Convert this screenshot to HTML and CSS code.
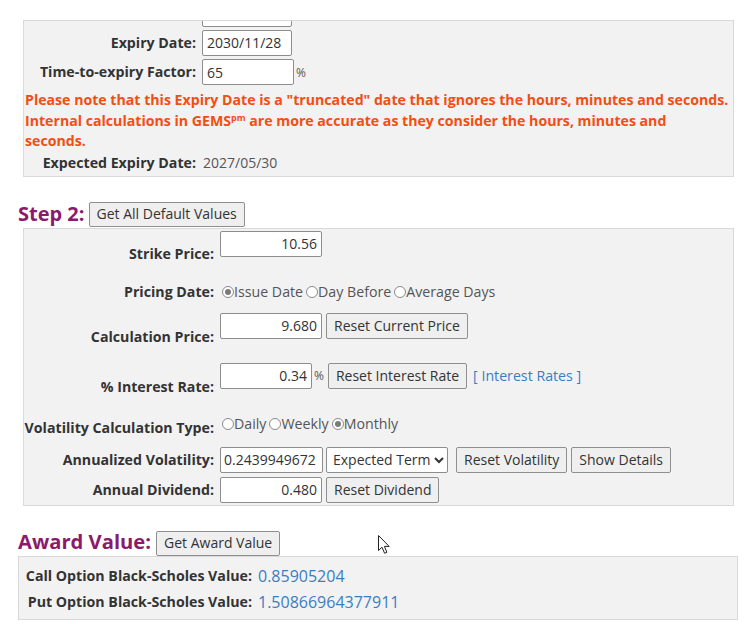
FILE: index.html
```html
<!DOCTYPE html>
<html>
<head>
<meta charset="utf-8">
<link rel="stylesheet" href="styles.css">
</head>
<body>
<div class="page">
  <section class="panel p1">
    <div class="row r0"><div class="lbl"></div><div class="ctl"><input class="inp w90" value=""></div></div>
    <div class="row r-exp"><div class="lbl">Expiry Date:</div><div class="ctl"><input class="inp w90" value="2030/11/28"></div></div>
    <div class="row r-fac"><div class="lbl">Time-to-expiry Factor:</div><div class="ctl"><input class="inp w92" value="65"><span class="pct">%</span></div></div>
    <p class="note">Please note that this Expiry Date is a "truncated" date that ignores the hours, minutes and seconds.<br>Internal calculations in GEMS<sup>pm</sup> are more accurate as they consider the hours, minutes and<br>seconds.</p>
    <div class="row r-eed"><div class="lbl">Expected Expiry Date:</div><div class="ctl val">2027/05/30</div></div>
  </section>

  <div class="head step"><h2>Step 2:</h2><button class="btn">Get All Default Values</button></div>

  <section class="panel p2">
    <div class="row s1"><div class="lbl">Strike Price:</div><div class="ctl"><input class="inp num w102" value="10.56"></div></div>
    <div class="row s2"><div class="lbl">Pricing Date:</div><div class="ctl radios">
      <label><input type="radio" name="pd" checked>Issue Date</label><label><input type="radio" name="pd">Day Before</label><label><input type="radio" name="pd">Average Days</label>
    </div></div>
    <div class="row s3"><div class="lbl">Calculation Price:</div><div class="ctl"><input class="inp num w102" value="9.680"><button class="btn">Reset Current Price</button></div></div>
    <div class="row s4"><div class="lbl">% Interest Rate:</div><div class="ctl"><input class="inp num w92" value="0.34"><span class="pct">%</span><button class="btn">Reset Interest Rate</button><a class="link" href="#">[ Interest Rates ]</a></div></div>
    <div class="row s5"><div class="lbl">Volatility Calculation Type:</div><div class="ctl radios">
      <label><input type="radio" name="vt">Daily</label><label><input type="radio" name="vt">Weekly</label><label><input type="radio" name="vt" checked>Monthly</label>
    </div></div>
    <div class="row s6"><div class="lbl">Annualized Volatility:</div><div class="ctl"><input class="inp w103" value="0.2439949672"><select class="sel"><option>Expected Term</option></select><button class="btn gapl">Reset Volatility</button><button class="btn">Show Details</button></div></div>
    <div class="row s7"><div class="lbl">Annual Dividend:</div><div class="ctl"><input class="inp num w102" value="0.480"><button class="btn">Reset Dividend</button></div></div>
  </section>

  <div class="head award"><h2>Award Value:</h2><button class="btn">Get Award Value</button></div>

  <section class="panel p3">
    <div class="vrow"><div class="vlbl">Call Option Black-Scholes Value:</div><div class="vval">0.85905204</div></div>
    <div class="vrow"><div class="vlbl">Put Option Black-Scholes Value:</div><div class="vval">1.50866964377911</div></div>
  </section>

  <svg class="cursor" width="13" height="20" viewBox="0 0 13 20"><path d="M0.5 0.5 L0.5 15.5 L4 12.2 L6.6 18.3 L8.9 17.3 L6.4 11.4 L11.2 11.4 Z" fill="#fff" stroke="#222" stroke-width="1" stroke-linejoin="round"/></svg>
</div>
</body>
</html>
```
FILE: styles.css
```css
* { box-sizing: border-box; }
html, body { margin: 0; padding: 0; background: #fff; }
body {
  font-family: "Open Sans", "Liberation Sans", sans-serif;
  font-size: 14px;
  color: #333;
  width: 748px;
  height: 624px;
  overflow: hidden;
}
.page { position: relative; padding-top: 20px; }

.panel {
  background: #f2f2f3;
  border: 1px solid #d9d9db;
}
.p1, .p2 { margin-left: 23px; width: 711px; }
.p1 { padding-bottom: 2px; }

.row { display: flex; }
.lbl {
  font-weight: 700;
  text-align: right;
  line-height: 20px;
  white-space: nowrap;
  font-size: 14.2px;
}
.ctl { display: flex; align-items: center; }

/* panel 1 */
.p1 .lbl { width: 172px; margin-right: 6px; }
.p1 .row { align-items: center; }
.r0 { height: 6px; overflow: hidden; align-items: flex-end !important; }
.r0 .ctl { align-self: flex-end; }
.r-exp { height: 31px; }
.r-fac { height: 28px; }
.r-eed { height: 22px; }
.val { color: #555; line-height: 20px; padding-left: 1px; }
.note {
  margin: 0;
  padding: 4px 0 0 1px;
  color: #f24e12;
  font-weight: 700;
  line-height: 20.5px;
  font-size: 14.15px;
  white-space: nowrap;
}
.note sup { font-size: 9px; vertical-align: 5px; line-height: 0; }

.inp {
  height: 26px;
  border: 1px solid #8d8d8d;
  border-radius: 2px;
  background: #fff;
  font-family: inherit;
  font-size: 14px;
  color: #333;
  padding: 0 4px;
  margin: 0;
  outline: none;
}
.num { text-align: right; }
.w90 { width: 90px; }
.w92 { width: 92px; }
.w102 { width: 102px; }
.w103 { width: 103px; }
.pct { font-size: 12px; color: #555; margin: 0 0 0 2px; }

.btn {
  height: 26px;
  font-family: inherit;
  font-size: 14px;
  color: #333;
  background: #efefef;
  border: 1px solid #8f8f8f;
  border-radius: 2px;
  padding: 0 7px;
  margin: 0 0 0 4px;
  line-height: 22px;
}
.sel {
  height: 26px;
  width: 122px;
  margin-left: 3px;
  font-family: inherit;
  font-size: 14px;
  color: #333;
  background: #fff;
  border: 1px solid #8d8d8d;
  border-radius: 2px;
  padding: 0 0 0 2px;
}
.gapl { margin-left: 8px; }
.link { color: #3b7dc2; text-decoration: none; margin-left: 6px; font-size: 14.2px; }

/* headings */
.head { display: flex; align-items: flex-end; padding-left: 18px; }
.head h2 { margin: 0; font-weight: 700; color: #8b1a6c; white-space: nowrap; }
.step { height: 51px; }
.step h2 { font-size: 20px; line-height: 24px; margin-bottom: 2px; }
.step .btn { height: 25px; margin-bottom: 1px; margin-left: 4px; }
.award { height: 50px; }
.award h2 { font-size: 20.2px; line-height: 24px; margin-bottom: 3px; }
.award .btn { height: 25px; margin-left: 5px; }

/* panel 2 */
.p2 .lbl { width: 190px; margin-right: 6px; }
.s1 { height: 35px; }
.s1 .lbl { align-self: flex-end; }
.s1 .ctl { align-self: flex-start; margin-top: 2px; }
.s2 { height: 38px; }
.s2 .lbl { align-self: flex-end; }
.s2 .ctl { align-self: flex-end; }
.s3 { height: 45px; }
.s3 .lbl { align-self: flex-end; }
.s3 .ctl { align-self: flex-start; margin-top: 11px; }
.s4 { height: 50px; }
.s4 .lbl { align-self: flex-end; }
.s4 .ctl { align-self: flex-start; margin-top: 16px; }
.s5 { height: 48px; }
.s5 .lbl { align-self: flex-end; margin-bottom: 7px; }
.s5 .ctl { align-self: flex-end; margin-bottom: 11px; }
.s6, .s7 { height: 30px; align-items: center; }
.s6 .inp { padding: 0 3px; }

.radios { line-height: 20px; color: #555; font-size: 14.2px; }
.radios label { display: inline-flex; align-items: center; margin-right: 1px; }
.radios input[type=radio] {
  appearance: none;
  -webkit-appearance: none;
  width: 12px;
  height: 12px;
  margin: 0 0 0 2px;
  border: 1px solid #8a8a8a;
  border-radius: 50%;
  background: #fff;
  position: relative;
}
.radios input[type=radio]:checked::after {
  content: "";
  position: absolute;
  left: 2px; top: 2px;
  width: 6px; height: 6px;
  border-radius: 50%;
  background: #7a7a7a;
}

/* panel 3 */
.p3 { margin-left: 18px; width: 720px; padding: 6px 0 4px 0; }
.vrow { display: flex; height: 26px; align-items: center; }
.vlbl { width: 233px; text-align: right; font-weight: 700; white-space: nowrap; font-size: 14.2px; }
.vval { margin-left: 6px; color: #3b7dc2; font-size: 16px; }

.cursor { position: absolute; left: 378px; top: 535px; }
```
